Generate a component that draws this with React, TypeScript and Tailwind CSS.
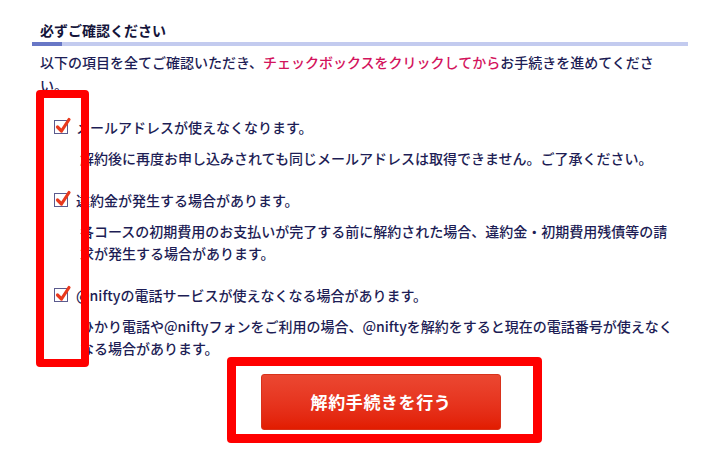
import React from 'react';

function Check() {
  return (
    <span className="relative inline-block w-[14px] h-[14px] shrink-0 border border-[#5b5b8e] bg-white">
      <svg
        className="absolute left-0 top-0 overflow-visible"
        width="14"
        height="14"
        viewBox="0 0 14 14"
        fill="none"
      >
        <path d="M2.5 6 L6.5 10 L14 -1.5" stroke="#e8391d" strokeWidth="3.2" strokeLinecap="round" strokeLinejoin="round" />
      </svg>
    </span>
  );
}

const items = [
  {
    label: 'メールアドレスが使えなくなります。',
    desc: '解約後に再度お申し込みされても同じメールアドレスは取得できません。ご了承ください。',
  },
  {
    label: '違約金が発生する場合があります。',
    desc: '各コースの初期費用のお支払いが完了する前に解約された場合、違約金・初期費用残債等の請求が発生する場合があります。',
  },
  {
    label: '@niftyの電話サービスが使えなくなる場合があります。',
    desc: 'ひかり電話や@niftyフォンをご利用の場合、@niftyを解約をすると現在の電話番号が使えなくなる場合があります。',
  },
];

export default function App() {
  return (
    <div className="relative w-[719px] h-[450px] overflow-hidden bg-white font-['Noto_Sans_CJK_JP',sans-serif] font-medium text-[#1d1d55]">
      <div className="ml-[32px] w-[656px] pt-[20px]">
        {/* Heading */}
        <h2 className="pl-2 text-[14px] font-bold leading-[20px] text-[#14143a]">必ずご確認ください</h2>
        <div className="mt-[2px] flex h-[4px] bg-[#c3cbef]">
          <div className="w-[30px] bg-[#6877c6]" />
        </div>

        {/* Intro */}
        <p className="mt-[5px] mr-[10px] pl-2 text-[14px] leading-[23px]">
          以下の項目を全てご確認いただき、<span className="text-[#d3145d]">チェックボックスをクリックしてから</span>お手続きを進めてください。
        </p>

        {/* Check items */}
        <div className="mt-[20px] mr-[10px] pl-[22px] flex flex-col gap-[20px]">
          {items.map((item) => (
            <div key={item.label}>
              <div className="flex items-center gap-[8px] text-[14px] leading-[20px]">
                <Check />
                <span>{item.label}</span>
              </div>
              <p className="mt-[10px] ml-[26px] text-[14px] leading-[22.5px]">{item.desc}</p>
            </div>
          ))}
        </div>

        {/* Submit */}
        <div className="mt-[14px] ml-[229px]">
          <button className="w-[240px] h-[56px] rounded-[3px] border border-[#d8321b] bg-gradient-to-b from-[#eb4731] to-[#e21c00] text-white text-[17px] font-bold tracking-[0.6px]">
            解約手続きを行う
          </button>
        </div>
      </div>

      {/* Annotation overlays */}
      <div className="absolute left-[36px] top-[90px] w-[53px] h-[277px] rounded-[4px] border-[8px] border-[#ff0000]" />
      <div className="absolute left-[227px] top-[357px] w-[315px] h-[86px] rounded-[4px] border-[9px] border-[#ff0000]" />
    </div>
  );
}
